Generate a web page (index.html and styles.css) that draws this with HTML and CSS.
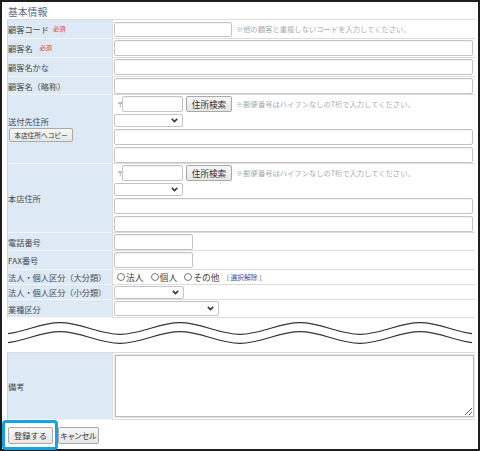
FILE: index.html
```html
<!DOCTYPE html>
<html lang="ja">
<head>
<meta charset="utf-8">
<link rel="stylesheet" href="styles.css">
</head>
<body>
<div class="frame">
  <div class="title">基本情報</div>
  <div class="form">
    <div class="row h19">
      <div class="lbl">顧客コード<span class="req req1">必須</span></div>
      <div class="val"><input type="text" class="in w-code"><span class="note">※他の顧客と重複しないコードを入力してください。</span></div>
    </div>
    <div class="row h19">
      <div class="lbl">顧客名<span class="req req2">必須</span></div>
      <div class="val"><input type="text" class="in full"></div>
    </div>
    <div class="row h19">
      <div class="lbl">顧客名かな</div>
      <div class="val"><input type="text" class="in full"></div>
    </div>
    <div class="row h18">
      <div class="lbl">顧客名（略称）</div>
      <div class="val"><input type="text" class="in full"></div>
    </div>
    <div class="row h69">
      <div class="lbl col"><span>送付先住所</span><button class="btn copy">本店住所へコピー</button></div>
      <div class="val addr">
        <div class="zip"><span class="yubin">〒</span><input type="text" class="in zipin"><button class="btn search">住所検索</button><span class="note">※郵便番号はハイフンなしの7桁で入力してください。</span></div>
        <div class="sel w-pref"><svg width="7" height="5" viewBox="0 0 7 5"><path d="M0.8 0.9 L3.5 3.6 L6.2 0.9" fill="none" stroke="#333" stroke-width="1.5"/></svg></div>
        <input type="text" class="in full16">
        <input type="text" class="in full16">
      </div>
    </div>
    <div class="row h69">
      <div class="lbl col"><span>本店住所</span></div>
      <div class="val addr">
        <div class="zip"><span class="yubin">〒</span><input type="text" class="in zipin"><button class="btn search">住所検索</button><span class="note">※郵便番号はハイフンなしの7桁で入力してください。</span></div>
        <div class="sel w-pref"><svg width="7" height="5" viewBox="0 0 7 5"><path d="M0.8 0.9 L3.5 3.6 L6.2 0.9" fill="none" stroke="#333" stroke-width="1.5"/></svg></div>
        <input type="text" class="in full16">
        <input type="text" class="in full16">
      </div>
    </div>
    <div class="row h18">
      <div class="lbl">電話番号</div>
      <div class="val"><input type="text" class="in w-tel"></div>
    </div>
    <div class="row h19">
      <div class="lbl">FAX番号</div>
      <div class="val"><input type="text" class="in w-tel"></div>
    </div>
    <div class="row h15">
      <div class="lbl">法人・個人区分（大分類）</div>
      <div class="val radios">
        <span class="radio"><span class="rb"></span>法人</span>
        <span class="radio"><span class="rb"></span>個人</span>
        <span class="radio"><span class="rb"></span>その他</span>
        <span class="clear">[ <span class="link">選択解除</span> ]</span>
      </div>
    </div>
    <div class="row h15">
      <div class="lbl">法人・個人区分（小分類）</div>
      <div class="val"><div class="sel w-sub"><svg width="7" height="5" viewBox="0 0 7 5"><path d="M0.8 0.9 L3.5 3.6 L6.2 0.9" fill="none" stroke="#333" stroke-width="1.5"/></svg></div></div>
    </div>
    <div class="row h18">
      <div class="lbl">業種区分</div>
      <div class="val"><div class="sel w-ind"><svg width="7" height="5" viewBox="0 0 7 5"><path d="M0.8 0.9 L3.5 3.6 L6.2 0.9" fill="none" stroke="#333" stroke-width="1.5"/></svg></div></div>
    </div>
  </div>
  <div class="wave">
    <svg width="464" height="34" viewBox="8 318 464 34">
      <path d="M0 334.3 C21.85 334.3 38.15 322.7 60 322.7 S98.15 334.3 120 334.3 S158.15 322.7 180 322.7 S218.15 334.3 240 334.3 S278.15 322.7 300 322.7 S338.15 334.3 360 334.3 S398.15 322.7 420 322.7 S458.15 334.3 480 334.3" fill="none" stroke="#333" stroke-width="1.3"/>
      <path d="M0 343.3 C21.85 343.3 38.15 331.7 60 331.7 S98.15 343.3 120 343.3 S158.15 331.7 180 331.7 S218.15 343.3 240 343.3 S278.15 331.7 300 331.7 S338.15 343.3 360 343.3 S398.15 331.7 420 331.7 S458.15 343.3 480 343.3" fill="none" stroke="#333" stroke-width="1.3"/>
    </svg>
  </div>
  <div class="form memo">
    <div class="row h67">
      <div class="lbl">備考</div>
      <div class="val area"><textarea class="ta"></textarea></div>
    </div>
  </div>
  <div class="actions">
    <button class="btn submit">登録する</button>
    <button class="btn cancel">キャンセル</button>
  </div>
  <div class="hl"></div>
</div>
</body>
</html>
```

FILE: styles.css
```css
* { box-sizing: border-box; margin: 0; padding: 0; }
html, body { width: 480px; height: 451px; overflow: hidden; background: #fff; }
body {
  font-family: "Noto Sans CJK JP", "Noto Sans", sans-serif;
  color: #444;
}
.frame {
  position: relative;
  width: 480px;
  height: 451px;
  border: 2px solid #1e1e1e;
  padding: 0 3px 0 5px;
}
.title {
  height: 18px;
  border-bottom: 1px solid #dcdcdc;
  font-size: 9.8px;
  line-height: 14px;
  padding-top: 3px;
  padding-left: 1px;
  color: #4d6b8f;
}
.form { border-left: 1px solid #d4d4d4; }
.form.memo { border-top: 1px solid #dcdcdc; }
.row { display: grid; grid-template-columns: 104px 1fr; }
.h15 { height: 15px; }
.h18 { height: 18px; }
.h19 { height: 19px; }
.h67 { height: 67px; }
.h69 { height: 69px; }
.lbl {
  background: #dde9f5;
  border-bottom: 1px solid #f3f6f9;
  display: flex;
  align-items: center;
  font-size: 8.2px;
  line-height: 10px;
  color: #4a4a4a;
  white-space: nowrap;
}
.lbl.col { flex-direction: column; align-items: flex-start; justify-content: center; }
.req { color: #e2302a; font-size: 6.2px; }
.req1 { margin-left: 4px; }
.req2 { margin-left: 7px; }
.val {
  border-left: 1px solid #dcdcdc;
  border-bottom: 1px solid #dcdcdc;
  display: flex;
  align-items: center;
  padding: 0 2px 0 1px;
  min-width: 0;
}
.in {
  display: block;
  height: 15px;
  border: 1px solid #c4c4c4;
  border-radius: 2px;
  background: #fff;
  box-shadow: inset 0 1px 1px rgba(0,0,0,0.06);
  outline: none;
}
.full { flex: 1; height: 16px; }
.full16 { height: 16px; width: 100%; }
.w-code { width: 118px; }
.w-tel { width: 79px; height: 16px; }
.note {
  margin-left: 4px;
  font-size: 7.3px;
  color: #a9a9a9;
  white-space: nowrap;
}
.val.addr {
  flex-direction: column;
  align-items: flex-start;
  justify-content: flex-start;
  padding-top: 1px;
  gap: 2px;
}
.zip { display: flex; align-items: center; height: 16px; }
.yubin { width: 8px; padding-left: 3px; font-size: 6.5px; color: #888; }
.zipin { width: 61px; height: 16px; }
.btn {
  font-family: "Noto Sans CJK JP", "Noto Sans", sans-serif;
  border: 1px solid #a9a9a9;
  border-radius: 2px;
  background: linear-gradient(#f7f7f7, #e6e6e6);
  color: #333;
  line-height: 1;
  display: flex;
  align-items: center;
  justify-content: center;
  white-space: nowrap;
}
.search { margin-left: 3px; width: 46px; height: 16px; font-size: 8.6px; }
.copy { margin-top: 2px; margin-left: 1px; width: 64px; height: 14px; font-size: 6.7px; }
.sel {
  display: flex;
  align-items: center;
  justify-content: flex-end;
  padding-right: 4px;
  border: 1px solid #c4c4c4;
  border-radius: 2px;
  background: #fff;
  height: 14px;
}
.sel svg { display: block; }
.w-pref { width: 69px; height: 13px; }
.w-sub { width: 70px; height: 13px; }
.w-ind { width: 105px; height: 15px; }
.radios { font-size: 8.8px; color: #444; padding-left: 4px; }
.radio { display: inline-flex; align-items: center; margin-right: 7px; white-space: nowrap; }
.rb {
  display: inline-block;
  width: 8px;
  height: 8px;
  border: 1px solid #777;
  border-radius: 50%;
  margin-right: 1px;
  background: #fff;
}
.clear { font-size: 6.8px; color: #3355aa; white-space: nowrap; }
.link { color: #3355aa; }
.wave { height: 34px; padding-left: 1px; }
.wave svg { display: block; }
.val.area { padding: 2px 1px 2px 2px; align-items: flex-start; }
.ta {
  display: block;
  width: 100%;
  height: 62px;
  border: 1px solid #bdbdbd;
  box-shadow: 0 0 0 1px #e6e6e6;
  background: #fff;
  outline: none;
}
.actions { display: flex; gap: 5px; margin-top: 7px; padding-left: 1px; }
.submit { width: 45px; height: 17px; font-size: 8.2px; }
.cancel { width: 41px; height: 17px; font-size: 8px; font-feature-settings: "palt"; }
.hl {
  position: absolute;
  left: 0;
  top: 418px;
  width: 56px;
  height: 30px;
  border: 3px solid #17a2e5;
  border-radius: 4px;
}
```
